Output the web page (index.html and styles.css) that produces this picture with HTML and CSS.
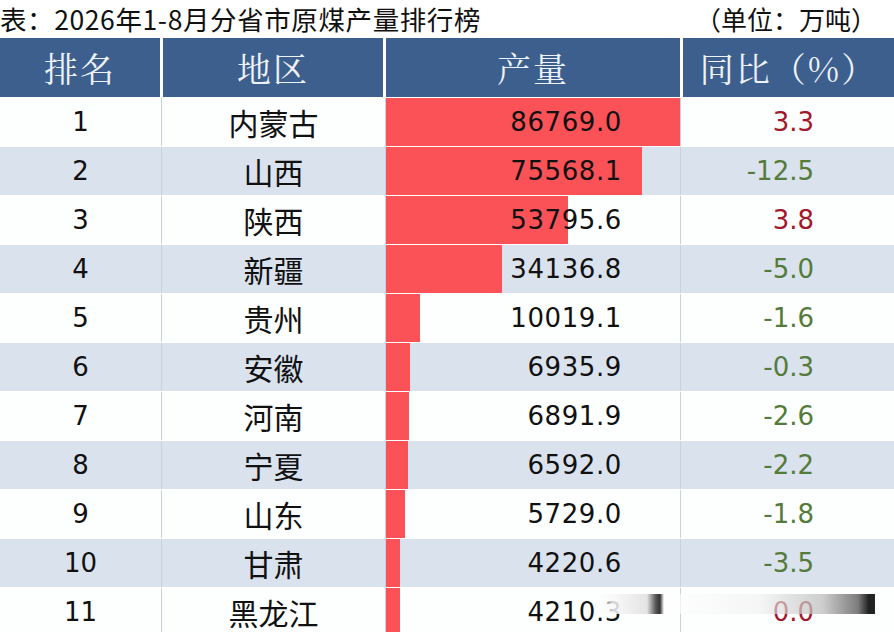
FILE: index.html
```html
<!DOCTYPE html>
<html lang="zh-CN">
<head>
<meta charset="utf-8">
<title>2026年1-8月分省市原煤产量排行榜</title>
<link rel="stylesheet" href="styles.css">
</head>
<body>
<div class="page">
  <div class="title-row">
    <div class="title">表：2026年1-8月分省市原煤产量排行榜</div>
    <div class="unit">（单位：万吨）</div>
  </div>
  <div class="head">
    <div class="hcell">排名</div>
    <div class="hcell">地区</div>
    <div class="hcell">产量</div>
    <div class="hcell">同比（%）</div>
  </div>
  <div class="rows">
    <div class="row"><div class="c rank">1</div><div class="c region">内蒙古</div><div class="c prod" style="--w:294px">86769.0</div><div class="c yoy up">3.3</div></div>
    <div class="row alt"><div class="c rank">2</div><div class="c region">山西</div><div class="c prod" style="--w:256px">75568.1</div><div class="c yoy down">-12.5</div></div>
    <div class="row"><div class="c rank">3</div><div class="c region">陕西</div><div class="c prod" style="--w:182px">53795.6</div><div class="c yoy up">3.8</div></div>
    <div class="row alt"><div class="c rank">4</div><div class="c region">新疆</div><div class="c prod" style="--w:116px">34136.8</div><div class="c yoy down">-5.0</div></div>
    <div class="row"><div class="c rank">5</div><div class="c region">贵州</div><div class="c prod" style="--w:34px">10019.1</div><div class="c yoy down">-1.6</div></div>
    <div class="row alt"><div class="c rank">6</div><div class="c region">安徽</div><div class="c prod" style="--w:24px">6935.9</div><div class="c yoy down">-0.3</div></div>
    <div class="row"><div class="c rank">7</div><div class="c region">河南</div><div class="c prod" style="--w:23px">6891.9</div><div class="c yoy down">-2.6</div></div>
    <div class="row alt"><div class="c rank">8</div><div class="c region">宁夏</div><div class="c prod" style="--w:22px">6592.0</div><div class="c yoy down">-2.2</div></div>
    <div class="row"><div class="c rank">9</div><div class="c region">山东</div><div class="c prod" style="--w:19px">5729.0</div><div class="c yoy down">-1.8</div></div>
    <div class="row alt"><div class="c rank">10</div><div class="c region">甘肃</div><div class="c prod" style="--w:14px">4220.6</div><div class="c yoy down">-3.5</div></div>
    <div class="row"><div class="c rank">11</div><div class="c region">黑龙江</div><div class="c prod" style="--w:14px">4210.3</div><div class="c yoy up">0.0</div></div>
  </div>
  <div class="wm" aria-hidden="true"><div class="wm-a"></div><div class="wm-b"></div></div>
</div>
</body>
</html>
```

FILE: styles.css
```css
html, body {
  margin: 0;
  padding: 0;
  background: #ffffff;
}
.page {
  position: relative;
  width: 894px;
  height: 632px;
  overflow: hidden;
  background: #ffffff;
  font-family: "Noto Sans CJK SC", "Noto Sans", sans-serif;
  color: #111111;
}
.title-row {
  height: 38px;
  display: flex;
  align-items: center;
  justify-content: space-between;
}
.title {
  font-size: 26.5px;
  line-height: 36px;
  margin-left: 0;
  letter-spacing: 0.6px;
  white-space: nowrap;
}
.unit {
  font-size: 26px;
  line-height: 36px;
  margin-right: 17px;
  white-space: nowrap;
}
.head {
  height: 59px;
  display: grid;
  grid-template-columns: 160px 220px 294px 1fr;
  column-gap: 3px;
  background: #ffffff;
}
.hcell {
  background: #3c5f8e;
  color: #eef2f7;
  font-family: "Noto Serif CJK SC", "Noto Sans CJK SC", serif;
  font-size: 34px;
  display: flex;
  align-items: center;
  justify-content: center;
  letter-spacing: 2px;
}
.rows {
  padding-top: 1px;
  display: flex;
  flex-direction: column;
  gap: 1px;
}
.row {
  height: 48px;
  flex: none;
  display: grid;
  grid-template-columns: 161px 224px 295px 1fr;
  background: #fdfefe;
}
.row.alt {
  background: #dae2ed;
}
.c {
  display: flex;
  align-items: center;
  height: 48px;
}
.c + .c {
  border-left: 1px solid #c9d1dc;
}
.rank {
  justify-content: center;
  font-family: "DejaVu Sans", sans-serif;
  font-size: 26px;
}
.region {
  justify-content: center;
  font-size: 30px;
}
.prod {
  justify-content: flex-end;
  padding-right: 58px;
  font-family: "DejaVu Sans", sans-serif;
  font-size: 26px;
  letter-spacing: 0.6px;
  background: linear-gradient(#fb5258, #fb5258) no-repeat 0 0 / var(--w) 100%;
}
.yoy {
  justify-content: flex-end;
  padding-right: 80px;
  font-family: "DejaVu Sans", sans-serif;
  font-size: 26px;
}
.yoy.up {
  color: #9e1a2c;
}
.yoy.down {
  color: #557b3c;
}
.wm {
  position: absolute;
  left: 596px;
  top: 594px;
  width: 279px;
  height: 20px;
  display: flex;
}
.wm-a {
  width: 68px;
  flex: none;
  background: linear-gradient(to right, rgba(255,255,255,0) 0%, rgba(248,248,248,0.85) 25%, rgba(225,225,225,0.9) 75%, #555 88%, #333 94%, rgba(255,255,255,0.9) 100%);
}
.wm-b {
  flex: 1;
  background: linear-gradient(to right, rgba(255,255,255,0.75) 0%, rgba(240,240,240,0.6) 45%, rgba(190,190,190,0.75) 75%, rgba(110,110,110,0.9) 92%, #222 97%, #222 100%);
}
```
